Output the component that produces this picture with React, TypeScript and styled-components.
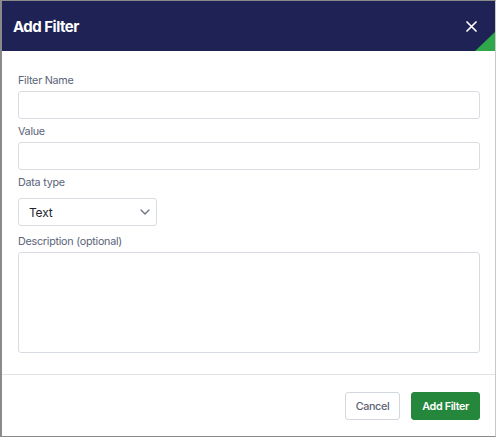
import React from "react";
import styled, { createGlobalStyle } from "styled-components";

const Global = createGlobalStyle`
  html, body { margin: 0; padding: 0; background: #ffffff; }
  * { box-sizing: border-box; }
  body { font-family: Inter, "Noto Sans", "Liberation Sans", sans-serif; }
`;

const Dialog = styled.div`
  width: 496px;
  height: 437px;
  display: flex;
  flex-direction: column;
  background: #ffffff;
  border: 1px solid #8a8a8a;
  border-right-color: #c9c9c9;
  border-left-width: 2px;
  overflow: hidden;
`;

const Header = styled.div`
  position: relative;
  height: 50px;
  flex: none;
  background: #1e2254;
  display: flex;
  align-items: center;
  justify-content: space-between;
  padding: 0 18px 0 11px;
`;

const Title = styled.h2`
  margin: 0;
  font-size: 15px;
  font-weight: 700;
  color: #ffffff;
  letter-spacing: -0.5px;
`;

const CloseButton = styled.button`
  width: 12px;
  height: 12px;
  padding: 0;
  border: 0;
  background: transparent;
  display: flex;
  align-items: center;
  justify-content: center;
  cursor: pointer;
`;

const Corner = styled.div`
  position: absolute;
  right: 0;
  bottom: 0;
  width: 20px;
  height: 19px;
  background: #2fa84c;
  clip-path: polygon(100% 0, 100% 100%, 0 100%);
`;

const Body = styled.div`
  flex: 1;
  padding: 22px 15px 20px 16px;
  display: flex;
  flex-direction: column;
`;

const Label = styled.label`
  display: block;
  font-size: 10.75px;
  line-height: 16px;
  letter-spacing: -0.25px;
  color: #5a6378;
  margin-bottom: 2px;
`;

const TextInput = styled.input`
  display: block;
  width: 100%;
  height: 28px;
  border: 1px solid #d9dce1;
  border-radius: 3px;
  margin: 0 0 5px;
  padding: 0 10px;
  font: inherit;
  font-size: 13px;
  outline: none;
`;

const SelectBox = styled.div`
  width: 139px;
  height: 28px;
  margin: 5px 0 8px;
  border: 1px solid #d9dce1;
  border-radius: 3px;
  display: flex;
  align-items: center;
  justify-content: space-between;
  padding: 0 6px 0 10px;
  font-size: 12px;
  letter-spacing: -0.2px;
  color: #222531;
`;

const TextArea = styled.textarea`
  display: block;
  width: 100%;
  height: 101px;
  border: 1px solid #d7dbe2;
  border-radius: 3px;
  resize: none;
  font: inherit;
  outline: none;
  margin: 0;
`;

const Footer = styled.div`
  flex: none;
  height: 62px;
  border-top: 1px solid #e1e3e7;
  display: flex;
  justify-content: flex-end;
  align-items: flex-start;
  gap: 11px;
  padding: 17px 15px 0 0;
`;

const Button = styled.button<{ $primary?: boolean }>`
  height: 28px;
  padding: 0 10px;
  border-radius: 3px;
  font-family: inherit;
  font-size: 10.75px;
  letter-spacing: -0.35px;
  font-weight: ${(p) => (p.$primary ? 600 : 500)};
  border: 1px solid ${(p) => (p.$primary ? "#25873b" : "#d3d7de")};
  background: ${(p) => (p.$primary ? "#25873b" : "#ffffff")};
  color: ${(p) => (p.$primary ? "#ffffff" : "#5b6274")};
  cursor: pointer;
`;

export default function App() {
  return (
    <>
      <Global />
      <Dialog>
        <Header>
          <Title>Add Filter</Title>
          <CloseButton aria-label="Close">
            <svg width="11" height="11" viewBox="0 0 11 11">
              <path d="M1 1 L10 10 M10 1 L1 10" stroke="#ffffff" strokeWidth="1.7" strokeLinecap="round" />
            </svg>
          </CloseButton>
          <Corner />
        </Header>
        <Body>
          <Label>Filter Name</Label>
          <TextInput />
          <Label>Value</Label>
          <TextInput />
          <Label>Data type</Label>
          <SelectBox>
            <span>Text</span>
            <svg width="10" height="6" viewBox="0 0 10 6">
              <path d="M1 1 L5 5 L9 1" stroke="#6b7080" strokeWidth="1.3" fill="none" strokeLinecap="round" strokeLinejoin="round" />
            </svg>
          </SelectBox>
          <Label>Description (optional)</Label>
          <TextArea />
        </Body>
        <Footer>
          <Button>Cancel</Button>
          <Button $primary>Add Filter</Button>
        </Footer>
      </Dialog>
    </>
  );
}
